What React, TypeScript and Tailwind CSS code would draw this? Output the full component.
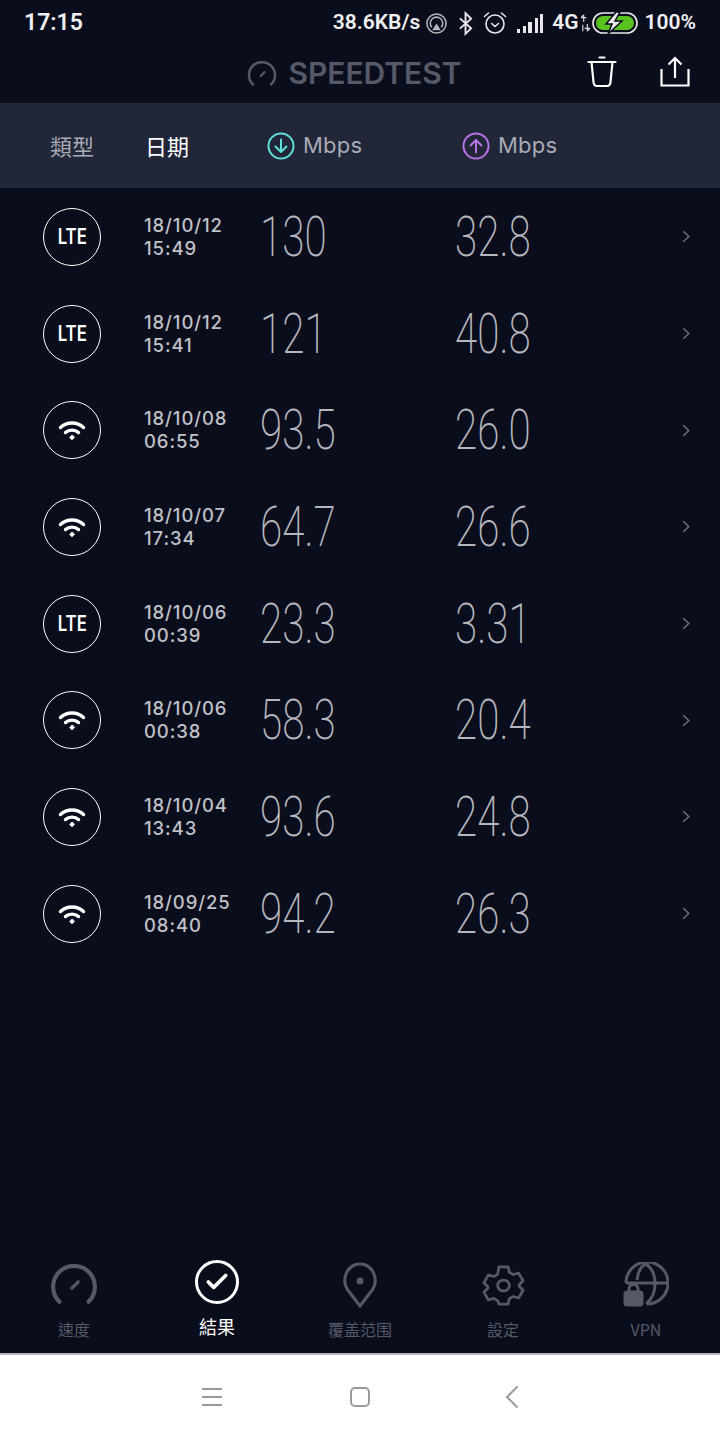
import { Check } from "lucide-react";

const rows = [
  { type: "lte", date: "18/10/12", time: "15:49", down: "130", up: "32.8" },
  { type: "lte", date: "18/10/12", time: "15:41", down: "121", up: "40.8" },
  { type: "wifi", date: "18/10/08", time: "06:55", down: "93.5", up: "26.0" },
  { type: "wifi", date: "18/10/07", time: "17:34", down: "64.7", up: "26.6" },
  { type: "lte", date: "18/10/06", time: "00:39", down: "23.3", up: "3.31" },
  { type: "wifi", date: "18/10/06", time: "00:38", down: "58.3", up: "20.4" },
  { type: "wifi", date: "18/10/04", time: "13:43", down: "93.6", up: "24.8" },
  { type: "wifi", date: "18/09/25", time: "08:40", down: "94.2", up: "26.3" },
];

const cjk = "font-['Noto_Sans_CJK_TC',sans-serif]";

function Gauge({ className }: { className: string }) {
  return (
    <svg viewBox="0 0 46 40" fill="none" stroke="currentColor" strokeLinecap="round" className={className}>
      <path d="M9 36A20 20 0 1 1 37 36" strokeWidth="4" />
      <path d="M21 23L27 17" strokeWidth="3.2" />
    </svg>
  );
}

function Wifi() {
  return (
    <svg viewBox="0 0 28 24" className="h-6 w-7" fill="none" stroke="white" strokeLinecap="round" strokeWidth="3.4">
      <path d="M2.5 9.5C9 3.5 19 3.5 25.5 9.5" />
      <path d="M7.5 14.5C11 11.3 17 11.3 20.5 14.5" />
      <path d="M14 17.2L11.8 19.5L14 21.8L16.2 19.5Z" fill="white" strokeWidth="1" strokeLinejoin="round" />
    </svg>
  );
}

function StatusBar() {
  return (
    <div className="flex h-[46px] items-center justify-between pl-6 pr-6 text-[21px] font-semibold text-[#f0f0f2] font-['Roboto',sans-serif]">
      <span className="text-[23px]">17:15</span>
      <div className="flex items-center">
        <span>38.6KB/s</span>
        <svg viewBox="0 0 24 24" className="ml-[5px] h-[23px] w-[23px]" fill="none" stroke="#b5b6bc" strokeWidth="1.6">
          <circle cx="12" cy="12" r="10" />
          <path d="M7 16a6.5 6.5 0 1 1 10 0" />
          <path d="M12 12l4.5 7h-9z" fill="#b5b6bc" stroke="none" />
        </svg>
        <svg viewBox="0 0 16 26" className="ml-[10px] h-[25px] w-[15px]" fill="none" stroke="#e8e8ea" strokeWidth="2">
          <path d="M2 7.5L14 18L8 24V2L14 8L2 18.5" />
        </svg>
        <svg viewBox="0 0 24 24" className="ml-[10px] h-[24px] w-[24px]" fill="none" stroke="#e8e8ea" strokeWidth="1.6" strokeLinecap="round">
          <circle cx="12" cy="13" r="9" />
          <path d="M8.5 12.5L12 15.5L15.5 12.5" />
          <path d="M1.5 5.5L5.5 2M22.5 5.5L18.5 2" />
        </svg>
        <div className="ml-[10px] flex h-[20px] items-end gap-[2.5px]">
          <div className="h-[4px] w-[3px] bg-[#e8e8ea]" />
          <div className="h-[7px] w-[3px] bg-[#e8e8ea]" />
          <div className="h-[11px] w-[4px] bg-[#e8e8ea]" />
          <div className="h-[15px] w-[3px] bg-[#e8e8ea]" />
          <div className="h-[19px] w-[3px] bg-[#e8e8ea]" />
        </div>
        <span className="ml-[9px]">4G</span>
        <svg viewBox="0 0 12 22" className="ml-[1px] h-[20px] w-[11px]" fill="none" stroke="#d8d8dc" strokeWidth="1.3">
          <path d="M4 10V2M1.5 4.5L4 2M1 5H7" />
          <path d="M8 12V20M10.5 17.5L8 20M5 17H11M3 13V20" />
        </svg>
        <svg viewBox="0 0 46 24" className="ml-[1px] h-[24px] w-[46px]">
          <rect x="1" y="2" width="44" height="20" rx="10" fill="none" stroke="#e8e8ea" strokeWidth="1.6" />
          <rect x="4" y="5" width="38" height="14" rx="7" fill="#59c21f" />
          <path d="M24 1L14 13H20L16 23L30 10H23L28 1Z" fill="#e8e8ea" stroke="#0a0d1c" strokeWidth="1.5" />
        </svg>
        <span className="ml-[7px]">100%</span>
      </div>
    </div>
  );
}

function TopBar() {
  return (
    <div className="relative flex h-[57px] items-center justify-center pb-[2px]">
      <div className="flex items-center gap-[11px] pr-[11px] text-[#565967]">
        <Gauge className="h-[26px] w-[30px]" />
        <span className="text-[30px] font-semibold font-['Inter',sans-serif] tracking-[0px]">SPEEDTEST</span>
      </div>
      <div className="absolute right-[30px] top-[10px] flex items-center gap-[43px]">
        <svg viewBox="0 0 30 32" className="h-[32px] w-[30px]" fill="none" stroke="white" strokeWidth="2.2" strokeLinecap="round">
          <path d="M1.5 6H28.5" />
          <path d="M12.5 1.5H17.5" />
          <path d="M4.5 6L6.5 26C6.7 28.5 8 30 10 30H20C22 30 23.3 28.5 23.5 26L25.5 6" />
        </svg>
        <svg viewBox="0 0 30 32" className="h-[32px] w-[30px]" fill="none" stroke="white" strokeWidth="2.2">
          <path d="M1.5 13V29.5H28.5V13" />
          <path d="M15 22V2M8.5 8.5L15 2L21.5 8.5" />
        </svg>
      </div>
    </div>
  );
}

function Header() {
  return (
    <div className="flex h-[85px] items-center bg-[#212639] pl-[50px] text-[22px]">
      <span className={`w-[95px] text-[#a9abb4] ${cjk}`}>類型</span>
      <span className={`w-[122px] text-white ${cjk}`}>日期</span>
      <div className="flex w-[195px] items-center gap-[8px]">
        <svg viewBox="0 0 28 28" className="h-[28px] w-[28px]" fill="none" stroke="#5fe0dc" strokeWidth="2" strokeLinecap="round" strokeLinejoin="round">
          <circle cx="14" cy="14" r="12.5" />
          <path d="M14 7.5V20M8.5 14.5L14 20L19.5 14.5" />
        </svg>
        <span className="text-[#a9abb4] font-['Inter',sans-serif] text-[22px] tracking-[0.2px]">Mbps</span>
      </div>
      <div className="flex items-center gap-[8px]">
        <svg viewBox="0 0 28 28" className="h-[28px] w-[28px]" fill="none" stroke="#b774e8" strokeWidth="2" strokeLinecap="round" strokeLinejoin="round">
          <circle cx="14" cy="14" r="12.5" />
          <path d="M14 20.5V8M8.5 13.5L14 8L19.5 13.5" />
        </svg>
        <span className="text-[#a9abb4] font-['Inter',sans-serif] text-[22px] tracking-[0.2px]">Mbps</span>
      </div>
    </div>
  );
}

function Value({ text, width }: { text: string; width: string }) {
  return (
    <div className={width}>
      <span className="inline-block origin-left scale-x-[0.72] text-[56px] leading-none font-extralight text-[#b6b7be] font-['Roboto',sans-serif]">
        {text}
      </span>
    </div>
  );
}

function Row({ row }: { row: (typeof rows)[number] }) {
  return (
    <div className="flex h-[96.7px] items-center pl-[43px] pt-[1px]">
      <div className="flex h-[58px] w-[58px] items-center justify-center rounded-full border-[1.5px] border-white">
        {row.type === "lte" ? (
          <span className="inline-block scale-x-[0.8] text-[21px] font-semibold text-white font-['Inter',sans-serif]">LTE</span>
        ) : (
          <Wifi />
        )}
      </div>
      <div className="ml-[43px] w-[116px] text-[18.5px] leading-[23px] font-medium tracking-[0.9px] text-[#c0c1c7] font-['Inter',sans-serif]">
        <div>{row.date}</div>
        <div>{row.time}</div>
      </div>
      <Value text={row.down} width="w-[195px]" />
      <Value text={row.up} width="w-[227px]" />
      <svg viewBox="0 0 10 16" className="h-[15px] w-[8px]" fill="none" stroke="#6f717c" strokeWidth="1.8">
        <path d="M1.5 1.5L8.5 8L1.5 14.5" />
      </svg>
    </div>
  );
}

function NavItem({ label, active, children }: { label: string; active?: boolean; children: React.ReactNode }) {
  return (
    <div className="flex w-[143px] flex-col items-center">
      <div className="flex h-[50px] items-center justify-center">{children}</div>
      <span className={`mt-[7px] ${cjk} ${active ? "-translate-y-[4px] text-[18px] text-white" : "text-[16px] text-[#565967]"}`}>{label}</span>
    </div>
  );
}

function BottomNav() {
  return (
    <div className="flex h-[103px] items-start justify-center pt-[10px]">
      <NavItem label="速度">
        <Gauge className="h-[42px] w-[48px] text-[#565967]" />
      </NavItem>
      <NavItem label="結果" active>
        <div className="-mt-[6px] flex h-[44px] w-[44px] items-center justify-center rounded-full border-[3px] border-white">
          <Check size={26} color="white" strokeWidth={3.4} />
        </div>
      </NavItem>
      <NavItem label="覆盖范围">
        <svg viewBox="0 0 36 46" className="h-[46px] w-[36px]" fill="none" stroke="#565967" strokeWidth="3" strokeLinejoin="round">
          <path d="M18 44L5 27C-1 16 6 2 18 2S37 16 31 27Z" />
          <circle cx="18" cy="19" r="3.5" fill="#565967" stroke="none" />
        </svg>
      </NavItem>
      <NavItem label="設定">
        <svg viewBox="0 0 24 24" className="h-[47px] w-[47px]" fill="none" stroke="#565967" strokeWidth="1.4" strokeLinejoin="round">
          <path d="M9.7 2.5h4.6l.7 2.8 2 1.1 2.7-.8 2.3 4-2 2 .0 .8 2 2-2.3 4-2.7-.8-2 1.1-.7 2.8H9.7L9 19.7l-2-1.1-2.7.8-2.3-4 2-2v-.8l-2-2 2.3-4 2.7.8 2-1.1z" />
          <ellipse cx="12" cy="12" rx="3" ry="2.8" />
        </svg>
      </NavItem>
      <NavItem label="VPN">
        <svg viewBox="0 0 46 46" className="h-[46px] w-[46px]" fill="none" stroke="#565967" strokeWidth="3">
          <path d="M3 21A21 21 0 1 1 24 42" />
          <path d="M3 21H44" />
          <path d="M14 18C15 9 18 4 23 2C29 6 32 13 32 22C32 30 29 37 23 42" />
          <rect x="2" y="30" width="17" height="13" rx="2" fill="#565967" />
          <path d="M6 30V27A4.5 4.5 0 0 1 15 27V30" />
        </svg>
      </NavItem>
    </div>
  );
}

function SoftKeys() {
  return (
    <div className="flex h-[87px] items-center justify-center border-t-2 border-[#b5b5ba] bg-white pb-[2px]">
      <div className="flex w-[20px] flex-col gap-[6px]">
        <div className="h-[2px] bg-[#9b9b9b]" />
        <div className="h-[2px] bg-[#9b9b9b]" />
        <div className="h-[2px] bg-[#9b9b9b]" />
      </div>
      <div className="ml-[128px] h-[20px] w-[20px] rounded-[5px] border-2 border-[#9b9b9b]" />
      <svg viewBox="0 0 14 24" className="ml-[135px] h-[24px] w-[14px]" fill="none" stroke="#9b9b9b" strokeWidth="2">
        <path d="M12.5 1.5L2 12L12.5 22.5" />
      </svg>
    </div>
  );
}

export default function App() {
  return (
    <div className="flex h-[1440px] w-[720px] flex-col overflow-hidden bg-[#0a0d1c]">
      <StatusBar />
      <TopBar />
      <Header />
      <div className="flex-1">
        {rows.map((row) => (
          <Row key={row.date + row.time} row={row} />
        ))}
      </div>
      <BottomNav />
      <SoftKeys />
    </div>
  );
}
